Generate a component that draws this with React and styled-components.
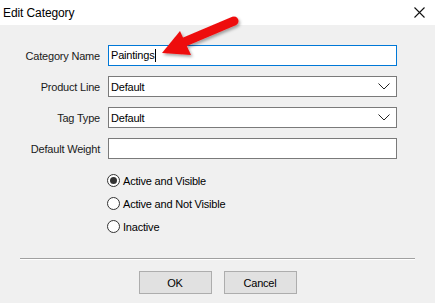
import React from "react";
import styled, { createGlobalStyle } from "styled-components";

const Global = createGlobalStyle`
  html, body {
    margin: 0;
    padding: 0;
    background: #f0f0f0;
  }
  * { box-sizing: border-box; }
`;

const Window = styled.div`
  position: relative;
  width: 435px;
  height: 303px;
  display: flex;
  flex-direction: column;
  background: #f0f0f0;
  font-family: "Liberation Sans", Arial, sans-serif;
  font-size: 11px;
  letter-spacing: -0.2px;
  color: #000;
  overflow: hidden;
`;

const TitleBar = styled.div`
  height: 25px;
  background: #fff;
  display: flex;
  align-items: center;
  justify-content: space-between;
  padding: 0 9px 0 3px;
  font-size: 12px;
  letter-spacing: -0.1px;
`;

const CloseButton = styled.div`
  width: 14px;
  height: 14px;
  display: flex;
  align-items: center;
  justify-content: center;
`;

const Body = styled.div`
  flex: 1;
  display: flex;
  flex-direction: column;
  padding-top: 20px;
`;

const Form = styled.div`
  display: grid;
  grid-template-columns: 100px 289px;
  grid-auto-rows: 21px;
  column-gap: 8px;
  row-gap: 10px;
`;

const Label = styled.div`
  display: flex;
  align-items: center;
  justify-content: flex-end;
  color: #1a1a1a;
`;

const Field = styled.div`
  display: flex;
  align-items: center;
  justify-content: space-between;
  background: #fff;
  border: 1px solid ${(p) => (p.$focused ? "#0078d7" : "#7a7a7a")};
  padding: 0 6px 0 2px;
`;

const Caret = styled.span`
  display: inline-block;
  width: 1px;
  height: 13px;
  background: #000;
  margin-left: 1px;
  vertical-align: middle;
`;

const Radios = styled.div`
  display: flex;
  flex-direction: column;
  margin: 10px 0 0 107px;
`;

const RadioRow = styled.div`
  height: 23px;
  display: flex;
  align-items: center;
  gap: 3px;
`;

const RadioCircle = styled.span`
  width: 13px;
  height: 13px;
  border-radius: 50%;
  border: 1px solid #333;
  background: #fff;
  display: flex;
  align-items: center;
  justify-content: center;

  &::after {
    content: "";
    width: 7px;
    height: 7px;
    border-radius: 50%;
    background: ${(p) => (p.$checked ? "#333" : "transparent")};
  }
`;

const Separator = styled.div`
  margin: 20px 20px 0 20px;
  height: 2px;
  border-top: 1px solid #a0a0a0;
  border-bottom: 1px solid #fff;
`;

const Buttons = styled.div`
  display: flex;
  justify-content: center;
  gap: 12px;
  margin-top: 11px;
`;

const Button = styled.div`
  width: 73px;
  height: 23px;
  border: 1px solid #adadad;
  background: #e1e1e1;
  display: flex;
  align-items: center;
  justify-content: center;
`;

const ArrowLayer = styled.svg`
  position: absolute;
  left: 0;
  top: 0;
  pointer-events: none;
`;

const Chevron = () => (
  <svg width="12" height="7" viewBox="0 0 12 7">
    <path d="M0.5 0.5 L6 6 L11.5 0.5" fill="none" stroke="#222" strokeWidth="1" />
  </svg>
);

const radios = [
  { label: "Active and Visible", checked: true },
  { label: "Active and Not Visible" },
  { label: "Inactive" },
];

const App = () => {
  return (
    <Window>
      <Global />
      <TitleBar>
        <span>Edit Category</span>
        <CloseButton>
          <svg width="11" height="11" viewBox="0 0 11 11">
            <path d="M0.5 0.5 L10.5 10.5 M10.5 0.5 L0.5 10.5" stroke="#111" strokeWidth="1.1" />
          </svg>
        </CloseButton>
      </TitleBar>
      <Body>
        <Form>
          <Label>Category Name</Label>
          <Field $focused>
            <span>
              Paintings
              <Caret />
            </span>
          </Field>
          <Label>Product Line</Label>
          <Field>
            <span>Default</span>
            <Chevron />
          </Field>
          <Label>Tag Type</Label>
          <Field>
            <span>Default</span>
            <Chevron />
          </Field>
          <Label>Default Weight</Label>
          <Field />
        </Form>
        <Radios>
          {radios.map((r) => (
            <RadioRow key={r.label}>
              <RadioCircle $checked={r.checked} />
              <span>{r.label}</span>
            </RadioRow>
          ))}
        </Radios>
        <Separator />
        <Buttons>
          <Button>OK</Button>
          <Button>Cancel</Button>
        </Buttons>
      </Body>
      <ArrowLayer width="435" height="303" viewBox="0 0 435 303">
        <defs>
          <filter id="sh" x="-20%" y="-20%" width="150%" height="160%">
            <feDropShadow dx="1.5" dy="2" stdDeviation="1.5" floodColor="#000" floodOpacity="0.35" />
          </filter>
        </defs>
        <g filter="url(#sh)" fill="#ee1111">
          <line x1="234" y1="21" x2="182" y2="43" stroke="#ee1111" strokeWidth="9" strokeLinecap="round" />
          <polygon points="162,53 180,31 191,55" />
        </g>
      </ArrowLayer>
    </Window>
  );
};

export default App;
